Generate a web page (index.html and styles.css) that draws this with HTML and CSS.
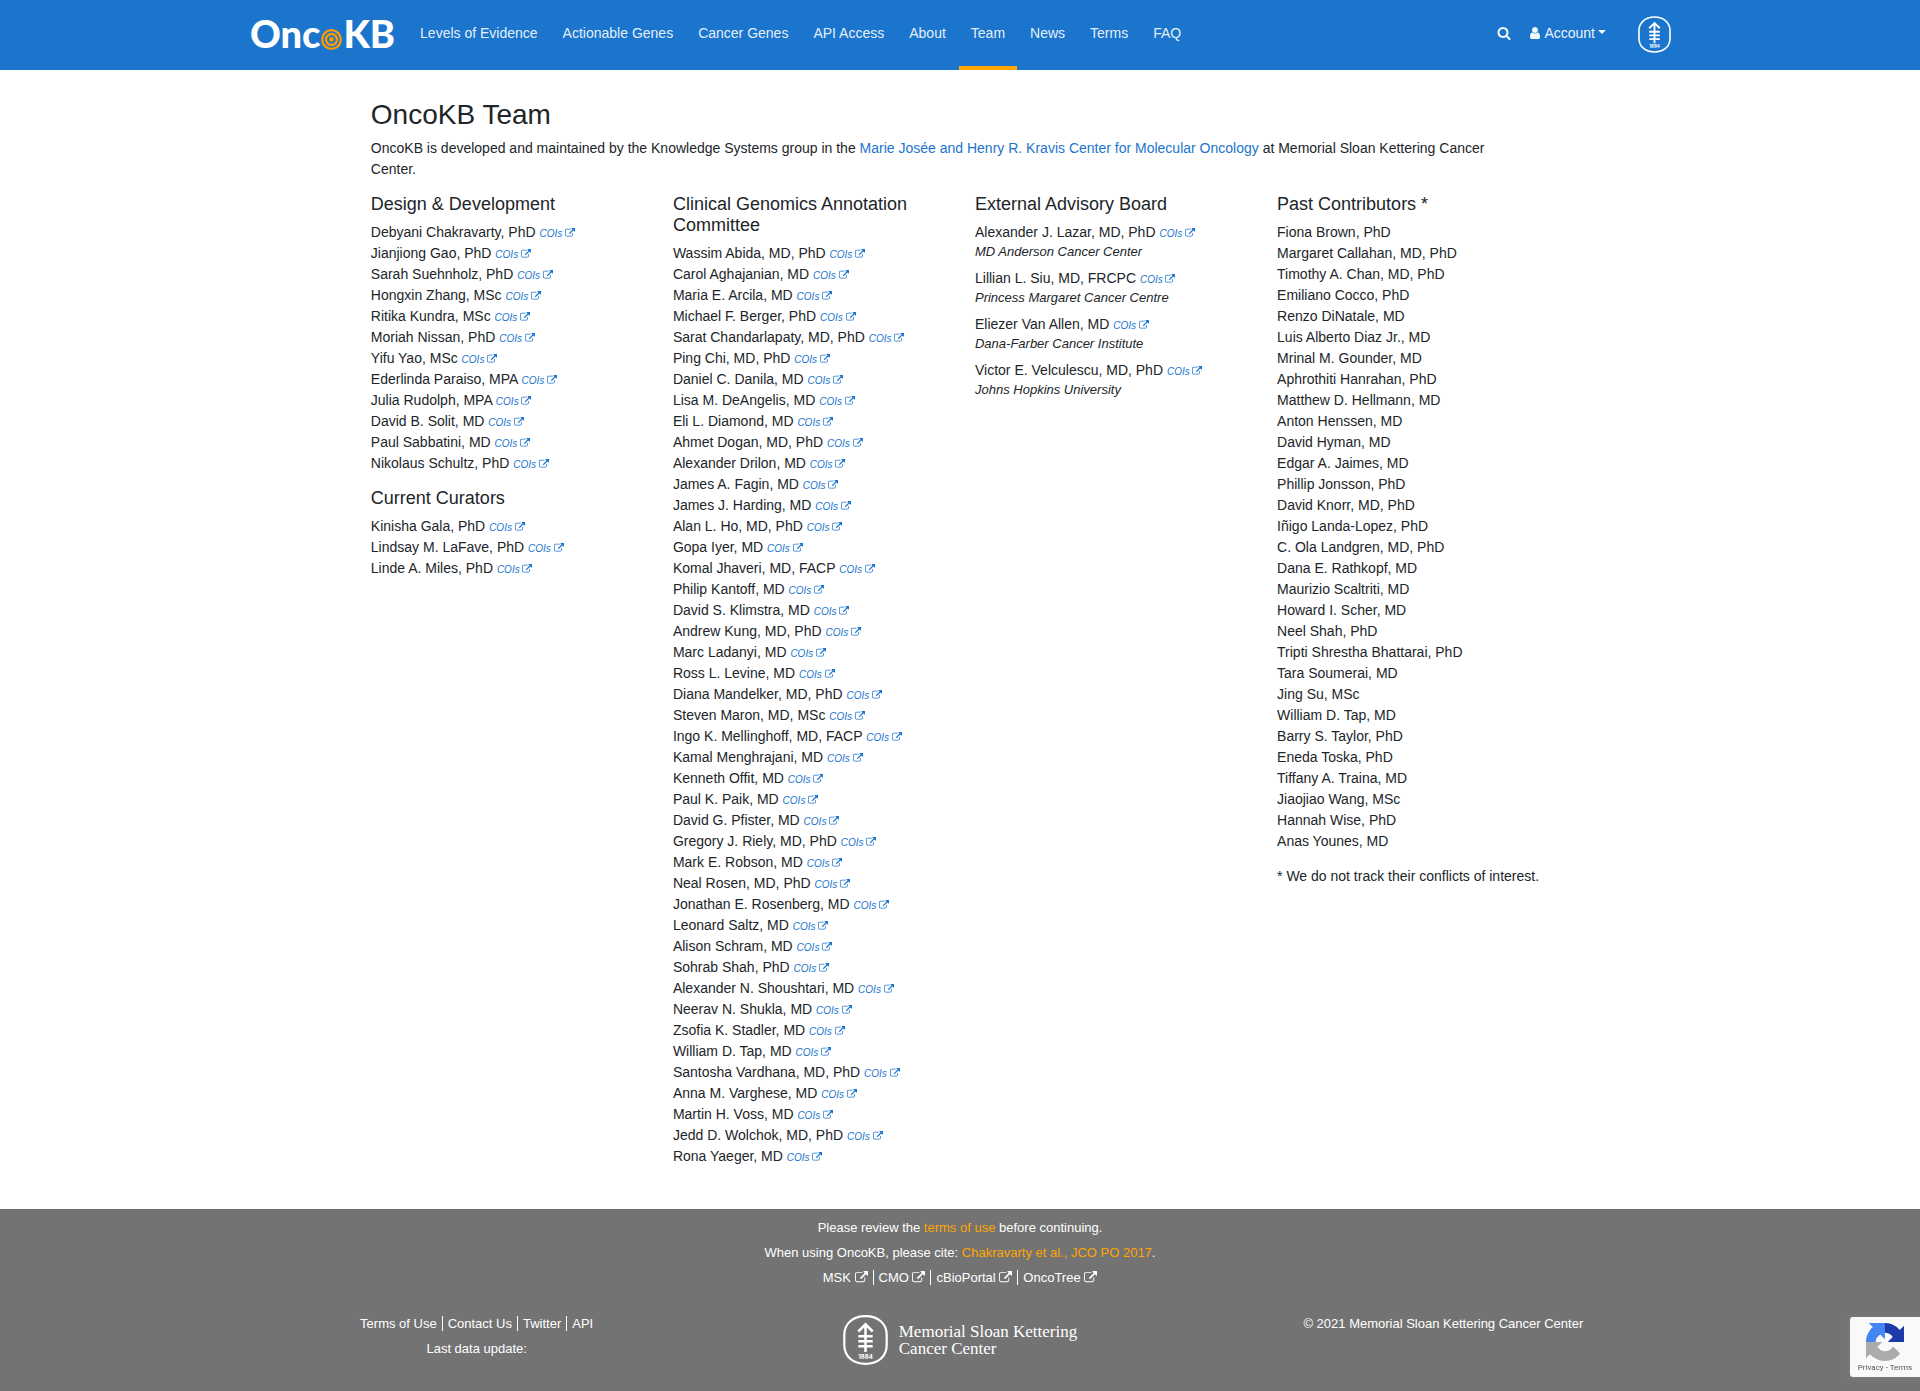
FILE: index.html
```
<!DOCTYPE html>
<html lang="en">
<head>
<meta charset="utf-8">
<meta name="viewport" content="width=device-width, initial-scale=1">
<title>OncoKB Team</title>
<link rel="stylesheet" href="styles.css">
</head>
<body>
<svg class="sprite" aria-hidden="true">
  <symbol id="ext" viewBox="0 0 1792 1792"><path d="M1408 928v320q0 119-84.5 203.5t-203.5 84.5h-832q-119 0-203.5-84.5t-84.5-203.5v-832q0-119 84.5-203.5t203.5-84.5h704q14 0 23 9t9 23v64q0 14-9 23t-23 9h-704q-66 0-113 47t-47 113v832q0 66 47 113t113 47h832q66 0 113-47t47-113v-320q0-14 9-23t23-9h64q14 0 23 9t9 23zm384-864v512q0 26-19 45t-45 19-45-19l-176-176-652 652q-10 10-23 10t-23-10l-114-114q-10-10-10-23t10-23l652-652-176-176q-19-19-19-45t19-45 45-19h512q26 0 45 19t19 45z"/></symbol>
  <symbol id="msk" viewBox="0 0 45 50">
    <path d="M22.500 1.200C35 1.200 43.700 8.500 43.700 20V30C43.700 41.500 35 48.800 22.500 48.800S1.300 41.500 1.300 30V20C1.300 8.500 10 1.200 22.500 1.200Z" fill="none" stroke="currentColor" stroke-width="2.200"/>
    <path d="M22.500 37V10M15.300 16.500L22.500 9.300L29.700 16.500M15.300 21.200H29.700M15.300 26.200H29.700M15.300 31.200H29.700" fill="none" stroke="currentColor" stroke-width="2.500"/>
    <text x="22.500" y="44" text-anchor="middle" class="seal-year">1884</text>
  </symbol>
</svg>

<header class="navbar">
  <div class="container navbar-inner">
    <a class="brand" href="#" aria-label="OncoKB">
      <span>Onc</span>
      <svg class="brand-target" viewBox="0 0 21 21" aria-hidden="true"><g fill="none" stroke="#ff9900" stroke-width="2.300"><circle cx="10.500" cy="10.500" r="9.300"/><circle cx="10.500" cy="10.500" r="5.500"/></g><circle cx="10.500" cy="10.500" r="2.400" fill="#ff9900"/></svg>
      <span>KB</span>
    </a>
    <nav class="nav">
      <a href="#">Levels of Evidence</a>
      <a href="#">Actionable Genes</a>
      <a href="#">Cancer Genes</a>
      <a href="#">API Access</a>
      <a href="#">About</a>
      <a href="#" class="active">Team</a>
      <a href="#">News</a>
      <a href="#">Terms</a>
      <a href="#">FAQ</a>
    </nav>
    <div class="nav-tools">
      <button type="button" class="tool" aria-label="Search"><svg class="fa" viewBox="0 0 1792 1792"><path d="M1216 832q0-185-131.500-316.500t-316.500-131.500-316.500 131.500-131.500 316.500 131.500 316.500 316.500 131.500 316.500-131.500 131.500-316.500zm512 832q0 52-38 90t-90 38q-54 0-90-38l-343-342q-179 124-399 124-143 0-273.500-55.500t-225-150-150-225-55.500-273.500 55.500-273.500 150-225 225-150 273.500-55.500 273.500 55.500 225 150 150 225 55.500 273.500q0 220-124 399l343 343q37 37 37 90z"/></svg></button>
      <button type="button" class="tool account"><svg class="fa" viewBox="128 0 1536 1792"><path d="M1536 1399q0 109-62.500 187t-150.500 78h-854q-88 0-150.500-78t-62.500-187q0-85 8.500-160.500t31.500-152 58.500-131 94-89 134.500-34.500q131 128 313 128t313-128q76 0 134.500 34.500t94 89 58.500 131 31.500 152 8.500 160.500zm-256-887q0 159-112.500 271.500t-271.500 112.500-271.500-112.500-112.500-271.500 112.500-271.500 271.500-112.500 271.500 112.500 112.500 271.500z"/></svg><span>Account</span><i class="caret"></i></button>
      <a class="nav-seal" href="#" aria-label="Memorial Sloan Kettering"><svg><use href="#msk"/></svg></a>
    </div>
  </div>
</header>

<main class="container">
  <div class="content">
    <h1>OncoKB Team</h1>
    <p class="intro">OncoKB is developed and maintained by the Knowledge Systems group in the <a href="#">Marie Josée and Henry R. Kravis Center for Molecular Oncology</a> at Memorial Sloan Kettering Cancer Center.</p>
    <div class="columns">
      <section>
        <h2>Design &amp; Development</h2>
        <ul>
          <li>Debyani Chakravarty, PhD <a class="coi" href="#">COIs <svg><use href="#ext"/></svg></a></li>
          <li>Jianjiong Gao, PhD <a class="coi" href="#">COIs <svg><use href="#ext"/></svg></a></li>
          <li>Sarah Suehnholz, PhD <a class="coi" href="#">COIs <svg><use href="#ext"/></svg></a></li>
          <li>Hongxin Zhang, MSc <a class="coi" href="#">COIs <svg><use href="#ext"/></svg></a></li>
          <li>Ritika Kundra, MSc <a class="coi" href="#">COIs <svg><use href="#ext"/></svg></a></li>
          <li>Moriah Nissan, PhD <a class="coi" href="#">COIs <svg><use href="#ext"/></svg></a></li>
          <li>Yifu Yao, MSc <a class="coi" href="#">COIs <svg><use href="#ext"/></svg></a></li>
          <li>Ederlinda Paraiso, MPA <a class="coi" href="#">COIs <svg><use href="#ext"/></svg></a></li>
          <li>Julia Rudolph, MPA <a class="coi" href="#">COIs <svg><use href="#ext"/></svg></a></li>
          <li>David B. Solit, MD <a class="coi" href="#">COIs <svg><use href="#ext"/></svg></a></li>
          <li>Paul Sabbatini, MD <a class="coi" href="#">COIs <svg><use href="#ext"/></svg></a></li>
          <li>Nikolaus Schultz, PhD <a class="coi" href="#">COIs <svg><use href="#ext"/></svg></a></li>
        </ul>
        <h2>Current Curators</h2>
        <ul>
          <li>Kinisha Gala, PhD <a class="coi" href="#">COIs <svg><use href="#ext"/></svg></a></li>
          <li>Lindsay M. LaFave, PhD <a class="coi" href="#">COIs <svg><use href="#ext"/></svg></a></li>
          <li>Linde A. Miles, PhD <a class="coi" href="#">COIs <svg><use href="#ext"/></svg></a></li>
        </ul>
      </section>
      <section>
        <h2>Clinical Genomics Annotation Committee</h2>
        <ul>
          <li>Wassim Abida, MD, PhD <a class="coi" href="#">COIs <svg><use href="#ext"/></svg></a></li>
          <li>Carol Aghajanian, MD <a class="coi" href="#">COIs <svg><use href="#ext"/></svg></a></li>
          <li>Maria E. Arcila, MD <a class="coi" href="#">COIs <svg><use href="#ext"/></svg></a></li>
          <li>Michael F. Berger, PhD <a class="coi" href="#">COIs <svg><use href="#ext"/></svg></a></li>
          <li>Sarat Chandarlapaty, MD, PhD <a class="coi" href="#">COIs <svg><use href="#ext"/></svg></a></li>
          <li>Ping Chi, MD, PhD <a class="coi" href="#">COIs <svg><use href="#ext"/></svg></a></li>
          <li>Daniel C. Danila, MD <a class="coi" href="#">COIs <svg><use href="#ext"/></svg></a></li>
          <li>Lisa M. DeAngelis, MD <a class="coi" href="#">COIs <svg><use href="#ext"/></svg></a></li>
          <li>Eli L. Diamond, MD <a class="coi" href="#">COIs <svg><use href="#ext"/></svg></a></li>
          <li>Ahmet Dogan, MD, PhD <a class="coi" href="#">COIs <svg><use href="#ext"/></svg></a></li>
          <li>Alexander Drilon, MD <a class="coi" href="#">COIs <svg><use href="#ext"/></svg></a></li>
          <li>James A. Fagin, MD <a class="coi" href="#">COIs <svg><use href="#ext"/></svg></a></li>
          <li>James J. Harding, MD <a class="coi" href="#">COIs <svg><use href="#ext"/></svg></a></li>
          <li>Alan L. Ho, MD, PhD <a class="coi" href="#">COIs <svg><use href="#ext"/></svg></a></li>
          <li>Gopa Iyer, MD <a class="coi" href="#">COIs <svg><use href="#ext"/></svg></a></li>
          <li>Komal Jhaveri, MD, FACP <a class="coi" href="#">COIs <svg><use href="#ext"/></svg></a></li>
          <li>Philip Kantoff, MD <a class="coi" href="#">COIs <svg><use href="#ext"/></svg></a></li>
          <li>David S. Klimstra, MD <a class="coi" href="#">COIs <svg><use href="#ext"/></svg></a></li>
          <li>Andrew Kung, MD, PhD <a class="coi" href="#">COIs <svg><use href="#ext"/></svg></a></li>
          <li>Marc Ladanyi, MD <a class="coi" href="#">COIs <svg><use href="#ext"/></svg></a></li>
          <li>Ross L. Levine, MD <a class="coi" href="#">COIs <svg><use href="#ext"/></svg></a></li>
          <li>Diana Mandelker, MD, PhD <a class="coi" href="#">COIs <svg><use href="#ext"/></svg></a></li>
          <li>Steven Maron, MD, MSc <a class="coi" href="#">COIs <svg><use href="#ext"/></svg></a></li>
          <li>Ingo K. Mellinghoff, MD, FACP <a class="coi" href="#">COIs <svg><use href="#ext"/></svg></a></li>
          <li>Kamal Menghrajani, MD <a class="coi" href="#">COIs <svg><use href="#ext"/></svg></a></li>
          <li>Kenneth Offit, MD <a class="coi" href="#">COIs <svg><use href="#ext"/></svg></a></li>
          <li>Paul K. Paik, MD <a class="coi" href="#">COIs <svg><use href="#ext"/></svg></a></li>
          <li>David G. Pfister, MD <a class="coi" href="#">COIs <svg><use href="#ext"/></svg></a></li>
          <li>Gregory J. Riely, MD, PhD <a class="coi" href="#">COIs <svg><use href="#ext"/></svg></a></li>
          <li>Mark E. Robson, MD <a class="coi" href="#">COIs <svg><use href="#ext"/></svg></a></li>
          <li>Neal Rosen, MD, PhD <a class="coi" href="#">COIs <svg><use href="#ext"/></svg></a></li>
          <li>Jonathan E. Rosenberg, MD <a class="coi" href="#">COIs <svg><use href="#ext"/></svg></a></li>
          <li>Leonard Saltz, MD <a class="coi" href="#">COIs <svg><use href="#ext"/></svg></a></li>
          <li>Alison Schram, MD <a class="coi" href="#">COIs <svg><use href="#ext"/></svg></a></li>
          <li>Sohrab Shah, PhD <a class="coi" href="#">COIs <svg><use href="#ext"/></svg></a></li>
          <li>Alexander N. Shoushtari, MD <a class="coi" href="#">COIs <svg><use href="#ext"/></svg></a></li>
          <li>Neerav N. Shukla, MD <a class="coi" href="#">COIs <svg><use href="#ext"/></svg></a></li>
          <li>Zsofia K. Stadler, MD <a class="coi" href="#">COIs <svg><use href="#ext"/></svg></a></li>
          <li>William D. Tap, MD <a class="coi" href="#">COIs <svg><use href="#ext"/></svg></a></li>
          <li>Santosha Vardhana, MD, PhD <a class="coi" href="#">COIs <svg><use href="#ext"/></svg></a></li>
          <li>Anna M. Varghese, MD <a class="coi" href="#">COIs <svg><use href="#ext"/></svg></a></li>
          <li>Martin H. Voss, MD <a class="coi" href="#">COIs <svg><use href="#ext"/></svg></a></li>
          <li>Jedd D. Wolchok, MD, PhD <a class="coi" href="#">COIs <svg><use href="#ext"/></svg></a></li>
          <li>Rona Yaeger, MD <a class="coi" href="#">COIs <svg><use href="#ext"/></svg></a></li>
        </ul>
      </section>
      <section>
        <h2>External Advisory Board</h2>
        <ul class="board">
          <li>Alexander J. Lazar, MD, PhD <a class="coi" href="#">COIs <svg><use href="#ext"/></svg></a><em>MD Anderson Cancer Center</em></li>
          <li>Lillian L. Siu, MD, FRCPC <a class="coi" href="#">COIs <svg><use href="#ext"/></svg></a><em>Princess Margaret Cancer Centre</em></li>
          <li>Eliezer Van Allen, MD <a class="coi" href="#">COIs <svg><use href="#ext"/></svg></a><em>Dana-Farber Cancer Institute</em></li>
          <li>Victor E. Velculescu, MD, PhD <a class="coi" href="#">COIs <svg><use href="#ext"/></svg></a><em>Johns Hopkins University</em></li>
        </ul>
      </section>
      <section>
        <h2>Past Contributors *</h2>
        <ul>
          <li>Fiona Brown, PhD</li>
          <li>Margaret Callahan, MD, PhD</li>
          <li>Timothy A. Chan, MD, PhD</li>
          <li>Emiliano Cocco, PhD</li>
          <li>Renzo DiNatale, MD</li>
          <li>Luis Alberto Diaz Jr., MD</li>
          <li>Mrinal M. Gounder, MD</li>
          <li>Aphrothiti Hanrahan, PhD</li>
          <li>Matthew D. Hellmann, MD</li>
          <li>Anton Henssen, MD</li>
          <li>David Hyman, MD</li>
          <li>Edgar A. Jaimes, MD</li>
          <li>Phillip Jonsson, PhD</li>
          <li>David Knorr, MD, PhD</li>
          <li>Iñigo Landa-Lopez, PhD</li>
          <li>C. Ola Landgren, MD, PhD</li>
          <li>Dana E. Rathkopf, MD</li>
          <li>Maurizio Scaltriti, MD</li>
          <li>Howard I. Scher, MD</li>
          <li>Neel Shah, PhD</li>
          <li>Tripti Shrestha Bhattarai, PhD</li>
          <li>Tara Soumerai, MD</li>
          <li>Jing Su, MSc</li>
          <li>William D. Tap, MD</li>
          <li>Barry S. Taylor, PhD</li>
          <li>Eneda Toska, PhD</li>
          <li>Tiffany A. Traina, MD</li>
          <li>Jiaojiao Wang, MSc</li>
          <li>Hannah Wise, PhD</li>
          <li>Anas Younes, MD</li>
        </ul>
        <p>* We do not track their conflicts of interest.</p>
      </section>
    </div>
  </div>
</main>

<footer class="footer">
  <div class="footer-top">
    <p>Please review the <a class="accent" href="#">terms of use</a> before continuing.</p>
    <p>When using OncoKB, please cite: <a class="accent" href="#">Chakravarty et al., JCO PO 2017</a>.</p>
    <p class="links"><a href="#">MSK <svg><use href="#ext"/></svg></a><a href="#">CMO <svg><use href="#ext"/></svg></a><a href="#">cBioPortal <svg><use href="#ext"/></svg></a><a href="#">OncoTree <svg><use href="#ext"/></svg></a></p>
  </div>
  <div class="container footer-bottom">
    <div>
      <p class="links"><a href="#">Terms of Use</a><a href="#">Contact Us</a><a href="#">Twitter</a><a href="#">API</a></p>
      <p>Last data update:</p>
    </div>
    <a class="msk-logo" href="#"><svg><use href="#msk"/></svg><span>Memorial Sloan Kettering<br>Cancer Center</span></a>
    <div><p>© 2021 Memorial Sloan Kettering Cancer Center</p></div>
  </div>
</footer>

<aside class="captcha">
  <svg viewBox="0 0 64 64" aria-hidden="true">
    <path d="M64 31.955l-.033-1.370V4.687l-7.160 7.160C50.948 4.674 42.033.093 32.050.093c-10.400 0-19.622 4.960-25.458 12.640l11.736 11.860a15.550 15.550 0 0 1 4.754-5.334c2.050-1.600 4.952-2.906 8.968-2.906.485 0 .860.057 1.135.163 4.976.393 9.288 3.140 11.828 7.124l-8.307 8.307L64 31.953" fill="#1c3aa9"/>
    <path d="M31.862.094l-1.370.033H4.594l7.160 7.160C4.580 13.147 0 22.060 0 32.046c0 10.400 4.960 19.622 12.640 25.458L24.500 45.768a15.550 15.550 0 0 1-5.334-4.754c-1.600-2.050-2.906-4.952-2.906-8.968 0-.485.057-.860.163-1.135.393-4.976 3.140-9.288 7.124-11.828l8.307 8.307L31.860.095" fill="#4285f4"/>
    <path d="M.001 32.045l.033 1.370v25.898l7.160-7.160c5.860 7.173 14.774 11.754 24.760 11.754 10.400 0 19.622-4.960 25.458-12.640l-11.736-11.860a15.550 15.550 0 0 1-4.754 5.334c-2.050 1.600-4.952 2.906-8.968 2.906-.485 0-.860-.057-1.135-.163-4.976-.393-9.288-3.140-11.828-7.124l8.307-8.307c-10.522.040-22.400.066-27.295-.005" fill="#ababab"/>
  </svg>
  <span><a href="#">Privacy</a> - <a href="#">Terms</a></span>
</aside>
</body>
</html>
```
FILE: styles.css
```
*, *::before, *::after { box-sizing: border-box; }

body {
  margin: 0;
  background: #fff;
  color: #212529;
  font: 14px/21px "Liberation Sans", Arial, sans-serif;
}

a { color: #1c75cd; text-decoration: none; }
a:hover { text-decoration: underline; }
p { margin: 0; }
h1, h2 { margin: 0 0 7px; font-weight: 400; }
h1 { font-size: 28px; line-height: 33px; }
h2 { font-size: 18px; line-height: 21px; }
ul { margin: 0 0 14px; padding: 0; list-style: none; }
svg { fill: currentColor; }

.sprite { display: none; }
.seal-year { font: 700 6px Inter, sans-serif; }

.container {
  max-width: 1450px;
  margin: 0 auto;
}

/* Header */
.navbar { background: #1c75cd; color: #fff; }
.navbar-inner {
  display: flex;
  min-height: 70px;
  padding: 0 14px 0 15px;
}
.brand {
  display: flex;
  align-items: center;
  margin-right: 13px;
  padding-bottom: 3px;
  color: #fff;
  font: 900 38px/67px Lato, sans-serif;
}
.brand:hover { text-decoration: none; }
.brand-target { width: 21px; height: 21px; margin: 12px 1px 0; }

.nav { display: flex; gap: 1px; }
.nav a {
  display: flex;
  align-items: center;
  padding: 0 12px;
  border: solid transparent;
  border-width: 0 0 4px;
  color: rgba(255, 255, 255, .9);
}
.nav .active { border-bottom-color: #ffa500; }

.nav-tools {
  display: flex;
  align-items: center;
  margin-left: auto;
}
.tool {
  display: flex;
  align-items: center;
  margin: 0 18px 4px 0;
  padding: 0;
  border: 0;
  background: none;
  color: rgba(255, 255, 255, .95);
  font: inherit;
}
.fa { width: 14px; height: 14px; }
.account { gap: 3px; margin-right: 32px; }
.account .fa { width: 12px; }
.caret {
  border: 4px solid transparent;
  border-top-color: currentColor;
  border-bottom: 0;
  margin-bottom: 3px;
}
.nav-seal { display: flex; margin-bottom: 2px; color: #fff; }
.nav-seal svg { width: 33px; height: 37px; }

/* Team page */
.content {
  width: 83.333%;
  margin: 0 auto;
  padding: 28px 15px;
}
.intro { padding-right: 30px; }
.columns {
  display: grid;
  grid-template-columns: repeat(4, 1fr);
  gap: 30px;
  margin-top: 14px;
}
.columns section { min-width: 0; }
.columns p { white-space: nowrap; }
.coi { font-size: 10px; line-height: 10px; font-style: italic; }
.coi svg { width: 10px; height: 10px; vertical-align: -1px; }
.board li { margin-bottom: 7px; }
.board em { display: block; font-size: 13px; line-height: 18px; }

/* Footer */
.footer {
  padding: 8px 0 24px;
  background: #737373;
  color: #fff;
  font-size: 13px;
  text-align: center;
}
.footer p { margin-bottom: 4px; }
.footer a { color: #fff; }
.footer .accent { color: #ffa500; }
.links a { padding: 0 5px; border-right: 1px solid #fff; }
.links a:last-child { border-right: 0; }
.links svg { width: 13px; height: 13px; vertical-align: -2px; }
.footer-bottom {
  display: grid;
  grid-template-columns: repeat(3, 1fr);
  margin-top: 25px;
}
.msk-logo {
  display: flex;
  justify-content: center;
  align-items: center;
  gap: 11px;
  height: 54px;
  font: 17px/17px "Liberation Serif", serif;
  text-align: left;
}
.msk-logo svg { width: 45px; height: 50px; }

.captcha {
  position: fixed;
  right: 0;
  bottom: 14px;
  display: flex;
  flex-direction: column;
  align-items: center;
  width: 70px;
  height: 60px;
  padding-top: 6px;
  border-radius: 3px 0 0 3px;
  background: #f9f9f9;
  box-shadow: 0 0 5px gray;
  color: #555;
  font: 8px/14px Roboto, sans-serif;
}
.captcha svg { width: 38px; height: 38px; }
.captcha a { color: inherit; }
```
